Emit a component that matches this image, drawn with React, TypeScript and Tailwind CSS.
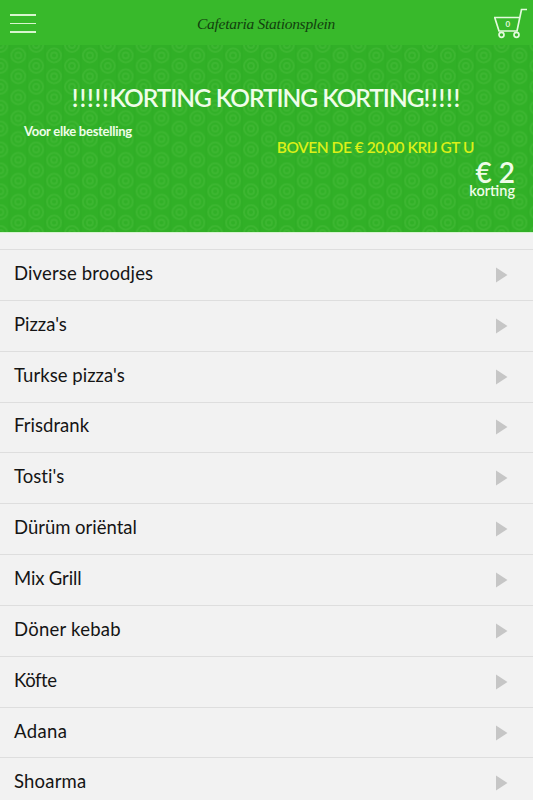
import React from "react";

const categories = [
  { name: "Diverse broodjes", tracking: "tracking-[0.15px]" },
  { name: "Pizza's", tracking: "tracking-[0px]" },
  { name: "Turkse pizza's", tracking: "tracking-[0.05px]" },
  { name: "Frisdrank", tracking: "tracking-[0.05px]" },
  { name: "Tosti's", tracking: "tracking-[0.05px]" },
  { name: "Dürüm oriëntal", tracking: "tracking-[-0.02px]" },
  { name: "Mix Grill", tracking: "tracking-[-0.15px]" },
  { name: "Döner kebab", tracking: "tracking-[0.25px]" },
  { name: "Köfte", tracking: "tracking-[-0.4px]" },
  { name: "Adana", tracking: "tracking-[0.4px]" },
  { name: "Shoarma", tracking: "tracking-[0.2px]" },
];

const Rings: React.FC<{ cx: number; cy: number }> = ({ cx, cy }) => (
  <>
    <circle cx={cx} cy={cy} r="7" />
    <circle cx={cx} cy={cy} r="3" />
  </>
);

const RingPattern = () => (
  <svg className="absolute inset-0 h-full w-full" aria-hidden="true">
    <defs>
      <pattern id="rings" width="35.8" height="20.9" patternUnits="userSpaceOnUse" x="0.4" y="0">
        <path d="M8.900 0v20.900M26.800 0v20.900" stroke="#2aa521" strokeWidth="1" strokeOpacity="0.5" />
        <g fill="none" stroke="#46bb3a" strokeWidth="1.8" strokeOpacity="0.55">
          <Rings cx={17.9} cy={10.45} />
          <Rings cx={0} cy={0} />
          <Rings cx={35.8} cy={0} />
          <Rings cx={0} cy={20.9} />
          <Rings cx={35.8} cy={20.9} />
        </g>
      </pattern>
    </defs>
    <rect width="100%" height="100%" fill="url(#rings)" />
  </svg>
);

const Header = () => (
  <header className="flex h-[45px] items-start justify-between bg-[#38b92b]">
    <div className="mt-[14px] ml-[10px] flex w-[26px] flex-col gap-[7px]">
      <span className="h-[1.5px] bg-[#d9f5cf]" />
      <span className="h-[1.5px] bg-[#d9f5cf]" />
      <span className="h-[1.5px] bg-[#d9f5cf]" />
    </div>
    <h1 className="mt-[13px] ml-[3px] w-[139px] font-['Liberation_Serif',serif] text-[15.500px] leading-[22px] tracking-[-0.27px] whitespace-nowrap text-[#123f0e] italic">
      Cafetaria Stationsplein
    </h1>
    <svg className="mt-[6px] mr-[5px]" width="34" height="34" viewBox="0 0 34 34" fill="none" stroke="#e4fadd" strokeWidth="1.7">
      <path d="M33 3.500h-5.500L23 25H5L.7 11.500h25" />
      <circle cx="7.500" cy="28.800" r="2.500" />
      <circle cx="22.500" cy="28.800" r="2.500" />
      <text x="13.700" y="21" fill="#e4fadd" stroke="none" fontSize="8" fontWeight="700" textAnchor="middle" fontFamily="Lato">0</text>
    </svg>
  </header>
);

const Banner = () => (
  <section className="relative h-[188px] border-b border-[#d5f3cf] bg-[#31b027] text-[#effde9]">
    <RingPattern />
    <div className="relative flex flex-col">
      <h2 className="mt-[38px] text-center text-[24.500px] leading-[30px] font-semibold tracking-[-1.05px] whitespace-nowrap">
        <span className="tracking-[0.8px]">!!!!!</span>KORTING KORTING KORTING<span className="tracking-[0.8px]">!!!!!</span>
      </h2>
      <p className="mt-[10px] ml-[24px] text-[13px] leading-4 font-bold tracking-[-0.27px]">Voor elke bestelling</p>
      <p className="mr-[59px] self-end text-[15.500px] leading-4 font-semibold tracking-[-0.45px] text-[#dcf018]">
        BOVEN DE € 20,00 KRIJ GT U
      </p>
      <div className="mr-[18px] flex flex-col items-end font-semibold">
        <p className="text-[28px] leading-[34px]">€ 2</p>
        <p className="-mt-[6px] text-[14.500px] leading-4">korting</p>
      </div>
    </div>
  </section>
);

const CategoryRow: React.FC<{ name: string; tracking: string }> = ({ name, tracking }) => (
  <li className="flex h-[50.85px] items-center justify-between border-t border-[#dedede] pr-[25px] pl-[14px]">
    <span className={`pb-[4px] text-[18.500px] leading-6 ${tracking}`}>{name}</span>
    <svg width="12" height="16" viewBox="0 0 12 16">
      <path d="M0 0.500 11.500 8 0 15.500z" fill="#c6c6c6" />
    </svg>
  </li>
);

export default function App() {
  return (
    <div className="h-[800px] overflow-hidden bg-[#f2f2f2] font-['Lato',sans-serif] text-[#151515]">
      <Header />
      <Banner />
      <ul className="mt-4">
        {categories.map((category) => (
          <CategoryRow key={category.name} {...category} />
        ))}
      </ul>
    </div>
  );
}
